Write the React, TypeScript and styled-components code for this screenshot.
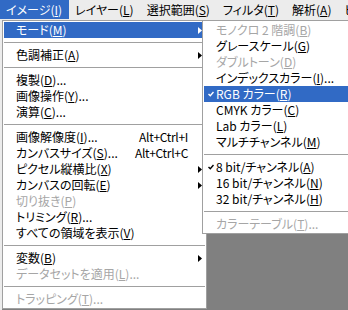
import React from "react";
import styled, { createGlobalStyle } from "styled-components";

const GlobalStyle = createGlobalStyle`
  html, body {
    margin: 0;
    padding: 0;
  }
  body {
    font-family: "Noto Sans CJK JP", "Liberation Sans", sans-serif;
    font-size: 12px;
  }
`;

type Entry =
  | { kind: "sep" }
  | {
      kind: "item";
      label: string;
      mnemonic?: string;
      tail?: string;
      shortcut?: string;
      sub?: boolean;
      disabled?: boolean;
      active?: boolean;
      checked?: boolean;
    };

const sep: Entry = { kind: "sep" };

const titles = [
  { label: "イメージ", mnemonic: "I", active: true },
  { label: "レイヤー", mnemonic: "L" },
  { label: "選択範囲", mnemonic: "S" },
  { label: "フィルタ", mnemonic: "T" },
  { label: "解析", mnemonic: "A" },
  { label: "ビュー", mnemonic: "V" },
];

const imageMenu: Entry[] = [
  { kind: "item", label: "モード", mnemonic: "M", sub: true, active: true },
  sep,
  { kind: "item", label: "色調補正", mnemonic: "A", sub: true },
  sep,
  { kind: "item", label: "複製", mnemonic: "D", tail: "..." },
  { kind: "item", label: "画像操作", mnemonic: "Y", tail: "..." },
  { kind: "item", label: "演算", mnemonic: "C", tail: "..." },
  sep,
  { kind: "item", label: "画像解像度", mnemonic: "I", tail: "...", shortcut: "Alt+Ctrl+I" },
  { kind: "item", label: "カンバスサイズ", mnemonic: "S", tail: "...", shortcut: "Alt+Ctrl+C" },
  { kind: "item", label: "ピクセル縦横比", mnemonic: "X", sub: true },
  { kind: "item", label: "カンバスの回転", mnemonic: "E", sub: true },
  { kind: "item", label: "切り抜き", mnemonic: "P", disabled: true },
  { kind: "item", label: "トリミング", mnemonic: "R", tail: "..." },
  { kind: "item", label: "すべての領域を表示", mnemonic: "V" },
  sep,
  { kind: "item", label: "変数", mnemonic: "B", sub: true },
  { kind: "item", label: "データセットを適用", mnemonic: "L", tail: "...", disabled: true },
  sep,
  { kind: "item", label: "トラッピング", mnemonic: "T", tail: "...", disabled: true },
];

const modeMenu: Entry[] = [
  { kind: "item", label: "モノクロ 2 階調", mnemonic: "B", disabled: true },
  { kind: "item", label: "グレースケール", mnemonic: "G" },
  { kind: "item", label: "ダブルトーン", mnemonic: "D", disabled: true },
  { kind: "item", label: "インデックスカラー", mnemonic: "I", tail: "..." },
  { kind: "item", label: "RGB カラー", mnemonic: "R", active: true, checked: true },
  { kind: "item", label: "CMYK カラー", mnemonic: "C" },
  { kind: "item", label: "Lab カラー", mnemonic: "L" },
  { kind: "item", label: "マルチチャンネル", mnemonic: "M" },
  sep,
  { kind: "item", label: "8 bit/チャンネル", mnemonic: "A", checked: true },
  { kind: "item", label: "16 bit/チャンネル", mnemonic: "N" },
  { kind: "item", label: "32 bit/チャンネル", mnemonic: "H" },
  sep,
  { kind: "item", label: "カラーテーブル", mnemonic: "T", tail: "...", disabled: true },
];

const Label = ({ label, mnemonic, tail }: { label: string; mnemonic?: string; tail?: string }) => (
  <>
    {label}
    {mnemonic && (
      <>
        (<u>{mnemonic}</u>)
      </>
    )}
    {tail}
  </>
);

const Arrow = ({ light }: { light?: boolean }) => (
  <svg width="4" height="7" viewBox="0 0 4 7">
    <polygon points="0,0 4,3.5 0,7" fill={light ? "#fff" : "#000"} />
  </svg>
);

const Check = ({ light }: { light?: boolean }) => (
  <svg width="6" height="6" viewBox="0 0 6 6">
    <path d="M0.5 3 L2.3 4.8 L5.5 1" stroke={light ? "#fff" : "#000"} strokeWidth="1.4" fill="none" />
  </svg>
);

const Menu = ({ entries }: { entries: Entry[] }) => (
  <>
    {entries.map((e, i) =>
      e.kind === "sep" ? (
        <Separator key={i} />
      ) : (
        <Row key={i} $active={e.active} $disabled={e.disabled}>
          <CheckCell>{e.checked && <Check light={e.active} />}</CheckCell>
          <ItemText>
            <Label label={e.label} mnemonic={e.mnemonic} tail={e.tail} />
          </ItemText>
          {e.shortcut && <Shortcut>{e.shortcut}</Shortcut>}
          <ArrowCell>{e.sub && <Arrow light={e.active} />}</ArrowCell>
        </Row>
      )
    )}
  </>
);

export default function App() {
  return (
    <>
      <GlobalStyle />
      <Screen>
        <MenuBar>
          {titles.map((t) => (
            <MenuTitle key={t.label} $active={t.active}>
              <Label label={t.label} mnemonic={t.mnemonic} />
            </MenuTitle>
          ))}
        </MenuBar>
        <Workspace>
          <LeftEdge />
          <Canvas />
        </Workspace>
        <DropMenu $left={2} $width={205}>
          <Menu entries={imageMenu} />
        </DropMenu>
        <DropMenu $left={202} $width={152}>
          <Menu entries={modeMenu} />
        </DropMenu>
      </Screen>
    </>
  );
}

const Screen = styled.div`
  position: relative;
  width: 348px;
  height: 310px;
  overflow: hidden;
  display: flex;
  flex-direction: column;
  background: #808080;
  color: #000;
  font-feature-settings: "palt";
`;

const MenuBar = styled.div`
  height: 20px;
  flex: none;
  display: flex;
  align-items: flex-start;
  background: #ececec;
  white-space: nowrap;
`;

const MenuTitle = styled.div<{ $active?: boolean }>`
  height: 19px;
  line-height: 19px;
  padding: 0 7px 0 6px;
  background: ${(p) => (p.$active ? "#316ac5" : "transparent")};
  color: ${(p) => (p.$active ? "#fff" : "#000")};
`;

const Workspace = styled.div`
  flex: 1;
  display: flex;
`;

const LeftEdge = styled.div`
  width: 2px;
  background: #ececec;
`;

const Canvas = styled.div`
  flex: 1;
  background: #808080;
`;

const DropMenu = styled.div<{ $left: number; $width: number }>`
  position: absolute;
  top: 20px;
  left: ${(p) => p.$left}px;
  width: ${(p) => p.$width}px;
  box-sizing: border-box;
  padding: 1px;
  border: 1px solid #a0a0a0;
  background: #fff;
`;

const Row = styled.div<{ $active?: boolean; $disabled?: boolean }>`
  height: 16px;
  display: flex;
  align-items: center;
  white-space: nowrap;
  background: ${(p) => (p.$active ? "#316ac5" : "transparent")};
  color: ${(p) => (p.$active ? "#fff" : p.$disabled ? "#a6a6a6" : "#000")};
`;

const CheckCell = styled.div`
  width: 12px;
  flex: none;
  display: flex;
  justify-content: center;
  padding-left: 1px;
  box-sizing: border-box;
`;

const ItemText = styled.div`
  flex: 1;
  line-height: 16px;
`;

const Shortcut = styled.div`
  line-height: 16px;
  letter-spacing: -0.3px;
`;

const ArrowCell = styled.div`
  width: 17px;
  flex: none;
  display: flex;
  align-items: center;
  padding-left: 10px;
  box-sizing: border-box;
`;

const Separator = styled.div`
  height: 9px;
  display: flex;
  align-items: center;

  &::after {
    content: "";
    flex: 1;
    height: 1px;
    background: #a0a0a0;
  }
`;
